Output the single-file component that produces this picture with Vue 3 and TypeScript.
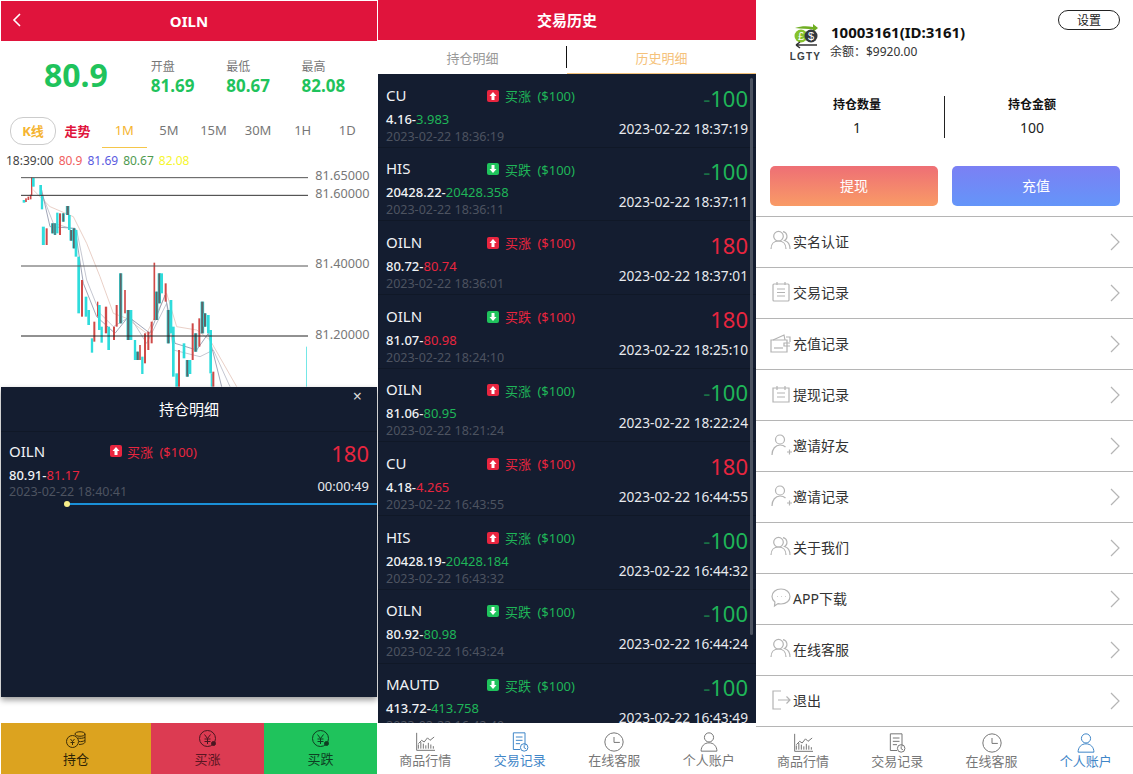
<script setup lang="ts">
interface Trade { name: string; dir: 'up' | 'down'; open: string; close: string; win: boolean; start: string; end: string }
const d = '2023-02-22 '
const trades: Trade[] = [
  { name: 'CU', dir: 'up', open: '4.16', close: '3.983', win: false, start: '18:36:19', end: '18:37:19' },
  { name: 'HIS', dir: 'down', open: '20428.22', close: '20428.358', win: false, start: '18:36:11', end: '18:37:11' },
  { name: 'OILN', dir: 'up', open: '80.72', close: '80.74', win: true, start: '18:36:01', end: '18:37:01' },
  { name: 'OILN', dir: 'down', open: '81.07', close: '80.98', win: true, start: '18:24:10', end: '18:25:10' },
  { name: 'OILN', dir: 'up', open: '81.06', close: '80.95', win: false, start: '18:21:24', end: '18:22:24' },
  { name: 'CU', dir: 'up', open: '4.18', close: '4.265', win: true, start: '16:43:55', end: '16:44:55' },
  { name: 'HIS', dir: 'up', open: '20428.19', close: '20428.184', win: false, start: '16:43:32', end: '16:44:32' },
  { name: 'OILN', dir: 'down', open: '80.92', close: '80.98', win: false, start: '16:43:24', end: '16:44:24' },
  { name: 'MAUTD', dir: 'down', open: '413.72', close: '413.758', win: false, start: '16:42:49', end: '16:43:49' },
]
const C = '#2fdcdc', R = '#cf4a48', G = '#5f6468'
const raw: [number, number, number, string, number][] = [
  [72,90,98,C,6],[78,85,96,R,5],[85,80,90,R,5],[92,74,88,R,5],[95,22,76,R,4],[100,24,50,C,6],[122,45,75,C,6],[126,75,118,C,5],
  [130,170,225,C,7],[140,175,225,R,6],[158,160,190,G,6],[165,160,195,G,4],[172,128,190,C,5],[180,130,195,R,6],[190,130,155,G,5],
  [203,108,135,G,7],[208,135,180,C,6],[214,180,212,G,7],[222,175,235,G,6],[228,180,260,C,6],[236,260,430,C,6],[246,330,440,R,6],
  [258,380,440,C,6],[266,420,465,C,6],[276,505,548,C,5],[283,455,515,R,6],[293,395,440,R,4],[298,405,480,C,6],[305,470,518,C,5],
  [318,410,490,R,7],[326,470,540,C,6],[342,470,510,R,6],[350,405,470,R,6],[362,310,460,G,6],[375,360,430,R,5],[385,420,510,G,7],
  [393,420,510,C,6],[405,510,570,C,5],[413,545,570,G,6],[420,525,570,R,5],[427,560,612,C,5],[435,490,580,R,6],[445,485,540,R,6],
  [455,455,520,R,6],[463,278,450,R,5],[470,365,450,G,6],[478,310,400,G,6],[485,310,370,C,6],[497,340,395,R,6],[505,420,520,G,6],
  [513,390,490,C,6],[520,470,620,C,6],[530,610,650,C,6],[537,540,650,R,6],[552,520,565,C,6],[562,570,620,G,6],[570,570,612,C,6],
  [578,460,570,R,6],[587,490,545,G,6],[598,445,530,R,6],[607,395,490,G,7],[615,430,470,G,6],[625,435,490,C,6],[632,480,610,C,6],
  [635,610,650,C,4],[640,605,650,R,6],[920,530,650,C,2],
]
// Dark candles carry a cyan edge in the reference, and cyan bodies are drawn slightly wider.
const candles = raw.flatMap((c): [number, number, number, string, number][] => {
  if (c[3] === G) return [[c[0], c[1], c[2], C, c[4] + 4], c]
  if (c[3] === C && c[4] > 2) return [[c[0], c[1], c[2], C, c[4] + 2]]
  return [c]
})
const hLines = [{ y: 23, c: '#555', l: '81.65000', t: 19 }, { y: 76, c: '#333', l: '81.60000', t: 73 }, { y: 288, c: '#555', l: '81.40000', t: 283 }, { y: 498, c: '#222', l: '81.20000', t: 494 }]
const ma = [
  { c: '#e4c6bc', p: '100,60 150,110 220,140 260,220 300,320 340,430 380,445 440,490 500,370 530,470 590,480 630,510 710,650' },
  { c: '#b9bcc8', p: '125,70 160,160 230,180 260,330 300,430 340,470 390,440 440,520 500,400 520,540 600,560 640,540 690,650' },
  { c: '#8d93a8', p: '125,60 150,170 225,175 250,340 290,440 345,490 385,440 450,490 495,375 525,520 590,540 625,490 665,650' },
]
const tfs = ['1M', '5M', '15M', '30M', '1H', '1D']
const quotes = [{ l: '开盘', v: '81.69' }, { l: '最低', v: '80.67' }, { l: '最高', v: '82.08' }]

const icons: Record<string, string[]> = {
  users: ['M1 20c0-5 3-8 7.500-8s7.500 3 7.500 8', 'M8.500 12a4.800 4.800 0 1 0 0-9.600 4.800 4.800 0 0 0 0 9.600z', 'M13 2.600a4.800 4.800 0 0 1 1.500 8.900c3.500 1 5.500 4 5.500 8.500'],
  note: ['M4 4h14a1 1 0 0 1 1 1v15a1 1 0 0 1-1 1H4a1 1 0 0 1-1-1V5a1 1 0 0 1 1-1z', 'M7 2v3M15 2v3', 'M7 9h8M7 12.500h8M7 16h8'],
  wallet: ['M1 9h16v12H1z', 'M3 9l11-5 1 5M16 6l4 0v5', 'M20 12h-6v3h6', 'M4 17h9'],
  cal: ['M3 6h16v14H3z', 'M7 4v4M15 4v4', 'M7 11h8M7 15h8'],
  invite: ['M10 11a4.500 4.500 0 1 0 0-9 4.500 4.500 0 0 0 0 9z', 'M2 22c0-6 3.500-10 8-10 2 0 4 .6 5.500 2', 'M17 19h5M19.500 16.500v5'],
  chat: ['M11 3c5.500 0 9 3.400 9 7.500S16.500 18 11 18c-1 0-2-.1-3-.4L4.500 20l.4-4C3 14.500 2 12.700 2 10.500 2 6.400 5.500 3 11 3z', 'M7 10.500h.6M11 10.500h.6M15 10.500h.6'],
  exit: ['M11 3H3v18h8', 'M8 12h12M16.500 8.500l3.500 3.500-3.500 3.500'],
}
const menu = [
  { t: '实名认证', i: 'users' }, { t: '交易记录', i: 'note' }, { t: '充值记录', i: 'wallet' }, { t: '提现记录', i: 'cal' },
  { t: '邀请好友', i: 'invite' }, { t: '邀请记录', i: 'invite' }, { t: '关于我们', i: 'users' }, { t: 'APP下载', i: 'chat' },
  { t: '在线客服', i: 'users' }, { t: '退出', i: 'exit' },
]
const navIcons: Record<string, string[]> = {
  chart: ['M2 1v21h22', 'M4 20v-5M7 20v-8M10 20v-6M13 20v-4M16 20v-7M19 20v-5M22 20v-3', 'M4 14l4-4 3 2 4-5 3 3 5-4'],
  record: ['M4 1h14v15M4 1v20h8', 'M7 6h8M7 10h8M7 14h5', 'M17 23a4.500 4.500 0 1 0 0-9 4.500 4.500 0 0 0 0 9z', 'M17 16v3l2 1'],
  clock: ['M12 23a11 11 0 1 0 0-22 11 11 0 0 0 0 22z', 'M12 6v6.500h7'],
  person: ['M12 12a5.500 5.500 0 1 0 0-11 5.500 5.500 0 0 0 0 11z', 'M2.500 23c0-6 4-10 9.500-10s9.500 4 9.500 10z'],
}
const nav = [{ t: '商品行情', i: 'chart' }, { t: '交易记录', i: 'record' }, { t: '在线客服', i: 'clock' }, { t: '个人账户', i: 'person' }]
</script>

<template>
  <div class="page">
    <section class="col left">
      <header class="bar">
        <svg class="back" width="9" height="14" viewBox="0 0 9 14" fill="none" stroke="#fff" stroke-width="1.600"><path d="M8 1L2 7l6 6" /></svg>
        OILN
      </header>
      <div class="quote">
        <div class="big">80.9</div>
        <div class="q" v-for="q in quotes" :key="q.l"><span>{{ q.l }}</span><b>{{ q.v }}</b></div>
      </div>
      <div class="tabs">
        <span class="pill">K线</span>
        <span class="trend">走势</span>
        <span v-for="(t, i) in tfs" :key="t" class="tf" :class="{ on: i === 0 }">{{ t }}</span>
      </div>
      <div class="ohlc"><span>18:39:00</span><i class="c1">80.9</i><i class="c2">81.69</i><i class="c3">80.67</i><i class="c4">82.08</i></div>
      <div class="chart">
        <svg width="378" height="217" viewBox="0 0 1134 651">
          <polyline v-for="m in ma" :key="m.c" :points="m.p" fill="none" :stroke="m.c" stroke-width="2.500" />
          <rect v-for="(c, i) in candles" :key="i" :x="c[0] - c[4] / 2" :y="c[1]" :width="c[4]" :height="c[2] - c[1]" :fill="c[3]" />
          <g v-for="h in hLines" :key="h.l">
            <line x1="63" x2="924" :y1="h.y" :y2="h.y" :stroke="h.c" stroke-width="3" />
            <text x="946" :y="h.t + 12" font-size="38" fill="#777">{{ h.l }}</text>
          </g>
        </svg>
      </div>
      <div class="popup">
        <div class="pop-title">持仓明细<span class="x">×</span></div>
        <div class="pop-row">
          <div class="pop-l">
            <div class="nm">OILN</div>
            <div class="px">80.91-<em class="red">81.17</em></div>
            <div class="tm">2023-02-22 18:40:41</div>
          </div>
          <div class="dirline red">
            <svg class="badge" viewBox="0 0 12 12"><rect width="12" height="12" rx="2" fill="#e8253f" /><path d="M6 2l3.500 4H7.500v4h-3V6H2.500z" fill="#fff" /></svg>
            买涨 ($100)
          </div>
          <div class="pop-r">
            <div class="pl red">180</div>
            <div class="count">00:00:49</div>
          </div>
        </div>
        <div class="progress"><span class="dot"></span></div>
      </div>
      <footer class="acts">
        <div class="act gold">
          <svg width="22" height="20" viewBox="0 0 22 20" fill="none" stroke="#3c2c08" stroke-width="1"><circle cx="7.500" cy="12.500" r="6" /><path d="M5.500 10l2 2.500 2-2.500M7.500 12.500V16M5.500 13.500h4" /><path d="M10 5c0-3 10-3 10 0v8c0 1.500-3 2.500-6 2.500M10 5c0 3 10 3 10 0M13 9c2 .6 5 .5 7-.8M14 12.500c2 .3 4 0 6-1" /></svg>
          <span>持仓</span>
        </div>
        <div class="act rose">
          <svg width="20" height="20" viewBox="0 0 20 20" fill="none" stroke="#4a1620" stroke-width="1"><circle cx="9.500" cy="9.500" r="8" /><path d="M6.500 5.500l3 4 3-4M9.500 9.500V15M6.500 10h6M6.500 12.500h6" /><circle cx="15.500" cy="14.500" r="2" fill="#4a1620" /></svg>
          <span>买涨</span>
        </div>
        <div class="act grn">
          <svg width="20" height="20" viewBox="0 0 20 20" fill="none" stroke="#0f3d22" stroke-width="1"><circle cx="9.500" cy="9.500" r="8" /><path d="M6.500 5.500l3 4 3-4M9.500 9.500V15M6.500 10h6M6.500 12.500h6" /><circle cx="15.500" cy="14.500" r="2" fill="#0f3d22" /></svg>
          <span>买跌</span>
        </div>
      </footer>
    </section>

    <section class="col mid">
      <header class="bar">交易历史</header>
      <div class="seg">
        <span class="s">持仓明细</span>
        <span class="s active">历史明细</span>
      </div>
      <div class="list">
        <div class="row" v-for="(t, i) in trades" :key="i">
          <div class="r-l">
            <div class="nm">{{ t.name }}</div>
            <div class="px">{{ t.open }}-<em :class="t.win ? 'red' : 'green'">{{ t.close }}</em></div>
            <div class="tm">{{ d + t.start }}</div>
          </div>
          <div class="dirline" :class="t.win ? 'red' : 'green'">
            <svg class="badge" viewBox="0 0 12 12">
              <rect width="12" height="12" rx="2" :fill="t.dir === 'up' ? '#e8253f' : '#1fc35c'" />
              <path v-if="t.dir === 'up'" d="M6 2l3.500 4H7.500v4h-3V6H2.500z" fill="#fff" />
              <path v-else d="M6 10L2.500 6h2V2h3v4h2z" fill="#fff" />
            </svg>
            {{ t.dir === 'up' ? '买涨' : '买跌' }} ($100)
          </div>
          <div class="r-r">
            <div class="pl" :class="t.win ? 'red' : 'green'"><span v-if="!t.win" class="minus">-</span>{{ t.win ? '180' : '100' }}</div>
            <div class="end">{{ d + t.end }}</div>
          </div>
        </div>
        <span class="scroll"></span>
      </div>
      <nav class="nav">
        <div class="ni" v-for="(n, i) in nav" :key="n.t" :class="{ sel: i === 1 }">
          <svg width="20" height="20" viewBox="0 0 24 24" fill="none" stroke="currentColor" stroke-width="1.200"><path v-for="p in navIcons[n.i]" :key="p" :d="p" /></svg>
          <span>{{ n.t }}</span>
        </div>
      </nav>
    </section>

    <section class="col right">
      <div class="user">
        <svg class="logo" width="32" height="38" viewBox="0 0 32 38">
          <path d="M5 4c6-2 12-2 18-1V0l5 4-5 4V5.500C18 4.500 11 5 5 4z" fill="#6fae22" />
          <circle cx="11" cy="12" r="6.500" fill="#86c22c" />
          <circle cx="21" cy="12" r="6.500" fill="#34393e" />
          <text x="11" y="16" font-size="11" fill="#fff" text-anchor="middle" font-family="'Liberation Sans',sans-serif">£</text>
          <text x="21" y="16" font-size="11" fill="#fff" text-anchor="middle" font-family="'Liberation Sans',sans-serif">$</text>
          <path d="M27 21H6M6 21l4-3M6 21l4 3" stroke="#333" stroke-width="1.500" fill="none" />
          <text x="15.500" y="36" font-size="10" font-weight="700" fill="#3a3f44" text-anchor="middle" letter-spacing="1.200" font-family="'Liberation Sans',sans-serif">LGTY</text>
        </svg>
        <div class="who"><b>10003161(ID:3161)</b><span>余额：$9920.00</span></div>
        <span class="set">设置</span>
      </div>
      <div class="stats">
        <div class="st"><b>持仓数量</b><span>1</span></div>
        <div class="st"><b>持仓金额</b><span>100</span></div>
      </div>
      <div class="btns">
        <div class="btn wd">提现</div>
        <div class="btn dp">充值</div>
      </div>
      <div class="menu">
        <div class="mi" v-for="m in menu" :key="m.t">
          <svg width="22" height="24" viewBox="0 0 22 24" fill="none" stroke="#b3b3b3" stroke-width="1.200"><path v-for="p in icons[m.i]" :key="p" :d="p" /></svg>
          <span>{{ m.t }}</span>
          <svg class="chev" width="10" height="18" viewBox="0 0 10 18" fill="none" stroke="#b5b5b5" stroke-width="1.200"><path d="M1 1l8 8-8 8" /></svg>
        </div>
      </div>
      <nav class="nav">
        <div class="ni" v-for="(n, i) in nav" :key="n.t" :class="{ sel: i === 3 }">
          <svg width="20" height="20" viewBox="0 0 24 24" fill="none" stroke="currentColor" stroke-width="1.200"><path v-for="p in navIcons[n.i]" :key="p" :d="p" /></svg>
          <span>{{ n.t }}</span>
        </div>
      </nav>
    </section>
  </div>
</template>

<style>
html, body { margin: 0; background: #fff; overflow: hidden; }
</style>

<style scoped>
.page {
  display: grid;
  grid-template-columns: 378px 378px 377px;
  width: 1133px;
  height: 774px;
  overflow: hidden;
  font-family: "Noto Sans", "Noto Sans CJK SC", sans-serif;
  color: #222;
}
.col { display: flex; flex-direction: column; height: 774px; position: relative; overflow: hidden; background: #fff; }
em, i { font-style: normal; }
.bar {
  height: 40px;
  background: #e0143c;
  color: #fff;
  font-size: 15px;
  font-weight: 700;
  display: flex;
  align-items: center;
  justify-content: center;
  position: relative;
  flex: none;
}
.mid .bar { padding-bottom: 2px; box-sizing: border-box; }
.red { color: #e8253f; }
.green { color: #1fb558; }
.minus { opacity: .55; }

/* left */
.left { padding: 1px 1px 0; box-sizing: border-box; }
.back { position: absolute; left: 11px; top: 12px; }
.quote { height: 72px; display: flex; align-items: center; flex: none; box-sizing: border-box; }
.big { width: 150px; text-align: center; font-size: 32px; font-weight: 700; color: #1fc35c; margin-top: -5px; }
.q { width: 75.500px; display: flex; flex-direction: column; font-size: 12px; color: #777; line-height: 18px; }
.q b { font-size: 17px; color: #1fc35c; line-height: 20px; }
.tabs { display: flex; align-items: center; height: 35px; font-size: 13px; color: #777; flex: none; }
.pill { width: 44px; height: 26px; margin-left: 9px; border: 1px solid #ccc; border-radius: 13px; text-align: center; line-height: 26px; color: #f5b431; font-weight: 700; }
.trend { width: 43px; text-align: center; color: #e0143c; font-weight: 700; }
.tf { width: 44.600px; text-align: center; height: 35px; line-height: 35px; box-sizing: border-box; }
.tf.on { color: #f5b431; border-bottom: 1px solid #f5c64a; margin-left: 3px; }
.ohlc { height: 22px; display: flex; gap: 5px; align-items: center; padding: 3px 0 0 5px; box-sizing: border-box; font-size: 12px; color: #444; flex: none; }
.c1 { color: #f06060; } .c2 { color: #5a5ae0; } .c3 { color: #4f9a4f; } .c4 { color: #f6f62e; }
.chart { flex: 1; min-height: 0; margin-left: -1px; }
.chart svg { display: block; overflow: visible; }
.chart text { font-family: "Noto Sans", sans-serif; }

.popup {
  position: absolute;
  left: 1px;
  right: 1px;
  top: 387px;
  height: 310px;
  background: #141d30;
  box-shadow: 0 3px 6px rgba(0, 0, 0, .4);
  color: #fff;
}
.pop-title { height: 44px; line-height: 44px; text-align: center; font-size: 15px; border-bottom: 1px solid #101827; position: relative; }
.x { position: absolute; right: 15px; top: -13px; font-size: 16px; color: #d8d8d8; }
.pop-row { display: flex; height: 72px; padding: 7px 8px 0; position: relative; box-sizing: border-box; }
.pop-l { width: 101px; }
.nm { font-size: 15px; line-height: 24px; color: #f0f2f5; }
.px { font-size: 13px; line-height: 18px; color: #f0f2f5; font-weight: 500; white-space: nowrap; margin-top: 3px; }
.px em { font-weight: 400; }
.tm { font-size: 12.500px; line-height: 16px; color: #4d5360; white-space: nowrap; }
.dirline { display: flex; align-items: center; gap: 5px; font-size: 13px; height: 24px; white-space: nowrap; word-spacing: 3px; }
.row .dirline { gap: 6px; }
.badge { width: 12px; height: 12px; flex: none; }
.pop-r { margin-left: auto; text-align: right; }
.pl { font-size: 22px; line-height: 28px; font-weight: 400; }
.count { font-size: 13px; color: #e8eaee; line-height: 18px; margin-top: 10px; }
.progress { position: absolute; left: 66px; right: 0; top: 116px; height: 2px; background: #1a90d8; }
.dot { position: absolute; left: -3px; top: -2px; width: 6px; height: 6px; border-radius: 50%; background: #f7ee8a; }
.acts { height: 51px; display: flex; flex: none; font-size: 13px; position: relative; background: #fff; }
.act { display: flex; flex-direction: column; align-items: center; padding-top: 6px; box-sizing: border-box; gap: 1px; }
.act span { line-height: 18px; }
.gold { width: 150px; background: #dca31f; color: #2e2305; }
.rose { width: 113px; background: #dc3b52; color: #5a1622; }
.grn { width: 113px; background: #1fc35c; color: #0e4023; }

/* middle */
.seg { height: 34px; display: flex; flex: none; font-size: 13px; color: #999; position: relative; }
.s { flex: 1; text-align: center; line-height: 36px; box-sizing: border-box; }
.active { color: #f5c27a; border-bottom: 1px solid #f5c27a; position: relative; }
.active::before { content: ""; position: absolute; left: -1px; top: 6px; height: 22px; width: 1px; background: #111; }
.list { flex: 1; min-height: 0; background: #141d30; overflow: hidden; position: relative; }
.row {
  height: 73.700px;
  box-sizing: border-box;
  display: flex;
  padding: 7.500px 8px 0 8px;
  border-bottom: 1px solid #101827;
  position: relative;
}
.r-l { width: 101px; }
.r-r { margin-left: auto; text-align: right; color: #e8eaee; }
.end { font-size: 13.700px; line-height: 18px; margin-top: 6px; white-space: nowrap; }
.row .nm { line-height: 26px; }
.row .dirline { height: 28px; }
.row .pl { line-height: 32px; }
.row .px { margin-top: 2px; }
.row .tm { margin-top: 1px; }
.scroll { position: absolute; right: 3px; top: 4px; width: 3px; height: 557px; background: #4c5361; border-radius: 2px; }
.nav { height: 51px; display: flex; flex: none; background: #fff; }
.ni { flex: 1; display: flex; flex-direction: column; align-items: center; color: #777; font-size: 13px; padding-top: 9px; box-sizing: border-box; }
.ni span { line-height: 17px; white-space: nowrap; }
.ni svg { flex: none; }
.ni.sel { color: #3f86c8; }

/* right */
.user { height: 62px; display: flex; position: relative; padding: 24px 0 0 34px; box-sizing: border-box; flex: none; }
.logo { flex: none; }
.who { margin-left: 9px; margin-top: -3px; display: flex; flex-direction: column; }
.who b { font-size: 15px; line-height: 22px; color: #111; }
.who span { font-size: 12px; line-height: 17px; color: #333; margin-left: -1px; }
.set { position: absolute; right: 13px; top: 10px; width: 60px; height: 18px; border: 1px solid #222; border-radius: 10px; text-align: center; font-size: 12px; line-height: 19px; color: #222; }
.stats { height: 104px; display: grid; grid-template-columns: 174px 175px; flex: none; padding: 34px 0 0 14px; box-sizing: border-box; }
.st { height: 42px; display: flex; flex-direction: column; align-items: center; font-size: 14px; color: #222; }
.st b { font-size: 12px; line-height: 16px; font-weight: 700; color: #111; margin-top: 1px; }
.st span { line-height: 29px; }
.st + .st { border-left: 1px solid #222; }
.btns { display: flex; gap: 14px; padding: 0 13px 0 14px; flex: none; }
.btn { flex: 1; height: 40px; border-radius: 5px; color: #fff; text-align: center; line-height: 40px; font-size: 14px; }
.wd { background: linear-gradient(#ee6f75, #f99b66); }
.dp { background: linear-gradient(#7b80f4, #6495f9); }
.menu { margin-top: 10px; border-top: 1px solid #b5b5b5; flex: none; }
.mi { height: 51px; box-sizing: border-box; border-bottom: 1px solid #b5b5b5; display: flex; align-items: center; padding: 0 13px 2px 14px; font-size: 14px; color: #333; gap: 1px; }
.chev { margin-left: auto; margin-top: 2px; }
.right .nav { position: absolute; left: 0; right: 0; bottom: 0; height: 47px; }
.right .ni { padding-top: 6px; }
</style>
